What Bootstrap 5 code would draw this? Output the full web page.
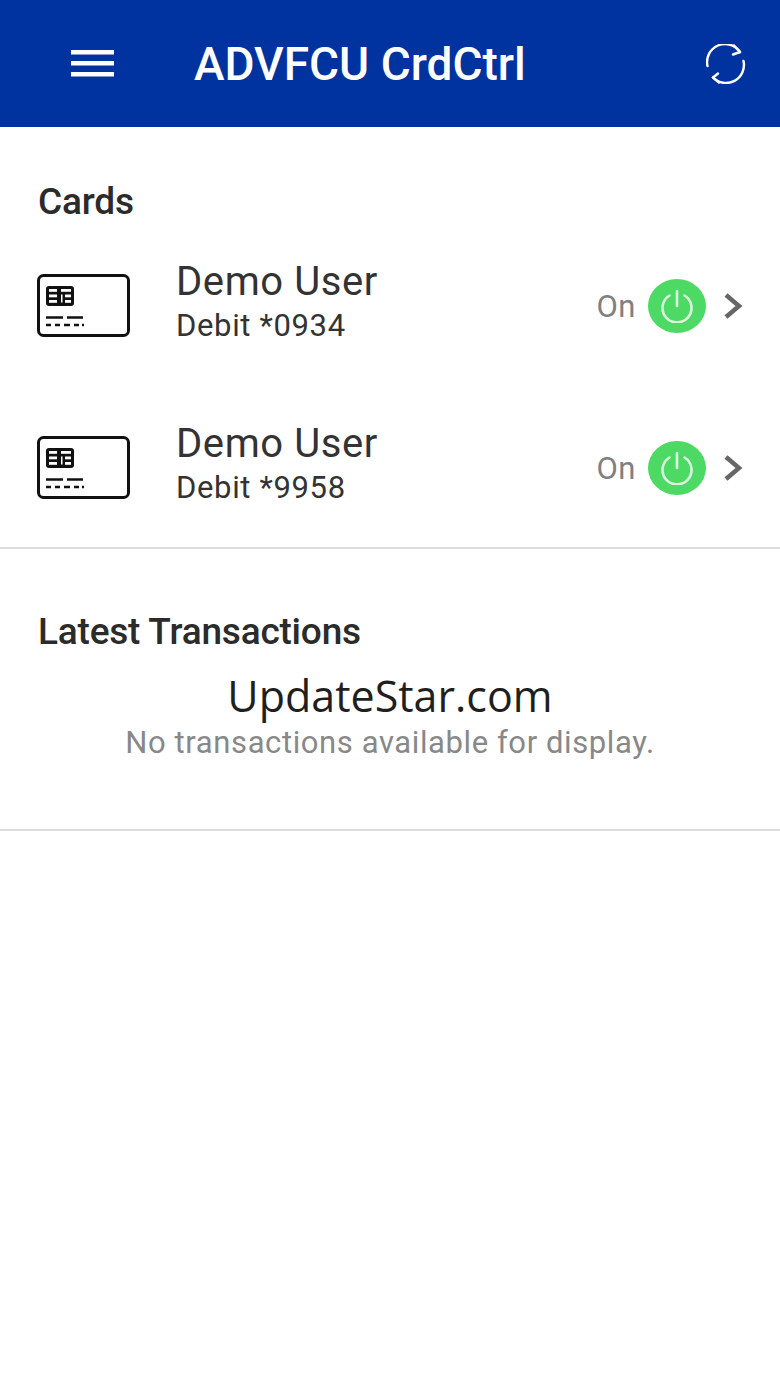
<!DOCTYPE html>
<html lang="en">
<head>
<meta charset="utf-8">
<title>ADVFCU CrdCtrl</title>
<link href="https://cdn.jsdelivr.net/npm/bootstrap@5.3.0/dist/css/bootstrap.min.css" rel="stylesheet">
<style>
html,body{background:#fff;font-family:Roboto,sans-serif;color:#2b2b2b}
.app-head{height:127px;background:#0033a0;color:#fff;padding:0 34px 0 71px}
.app-title{font-size:46px;font-weight:500;margin-left:80px;line-height:1}
.sect-title{font-size:37px;font-weight:500;padding-left:38px;line-height:40px;margin:0;color:#2b2b2b;letter-spacing:-.2px;padding-top:1px}
.sect-cards{height:420px;padding-top:54px}
.card-row{height:162px;padding:0 37px}
.card-rows{margin-top:3px}
.card-ico{margin-top:-2px}
.card-text{margin-left:46px;margin-top:-7px}
.card-name{font-size:40px;line-height:42px;letter-spacing:.6px;color:#333}
.card-sub{font-size:31px;line-height:36px;letter-spacing:.65px;color:#333;margin-top:5px}
.state{font-size:31px;color:#808080;letter-spacing:.5px;margin-right:12px;padding-top:2px}
.pwr{width:58px;height:54px;border-radius:50%;background:#4cd964}
.chev{margin-left:17px}
.rule{height:2px;background:#dcdcdc;opacity:1;border:0;margin:0}
.sect-trans{height:280px;padding-top:62px}
.mark-text{font-family:"Open Sans",sans-serif;font-size:43px;line-height:60px;text-align:center;color:#1f1f1f;margin-top:14px}
.empty-text{font-size:31px;line-height:36px;text-align:center;color:#888;letter-spacing:.6px;margin-top:-1px}
</style>
</head>
<body>
<header class="app-head d-flex align-items-center">
  <svg width="43" height="27" viewBox="0 0 43 27" aria-hidden="true"><g fill="#fff"><rect y="0" width="43" height="4.500"/><rect y="11" width="43" height="4.500"/><rect y="22" width="43" height="4.500"/></g></svg>
  <div class="app-title flex-grow-1">ADVFCU CrdCtrl</div>
  <svg width="40" height="40" viewBox="0 0 40 40" fill="none" stroke="#fff" stroke-width="2.400" stroke-linecap="round" stroke-linejoin="round" aria-hidden="true"><path d="M1.500 22A18 18 0 0 1 34 8"/><path d="M28 1.500L34 8l-7 2.500"/><path d="M37.500 17A18 18 0 0 1 7 33.500"/><path d="M12 29.500L7 33.500l6 5"/></svg>
</header>
<section class="sect-cards">
  <h2 class="sect-title">Cards</h2>
  <div class="card-rows">
    <div class="card-row d-flex align-items-center">
      <svg class="card-ico" width="93" height="63" viewBox="0 0 93 63" fill="none" stroke="#111" aria-hidden="true"><rect x="1.500" y="1.500" width="90" height="60" rx="5" stroke-width="3"/><rect x="9" y="12" width="28" height="20" rx="3" fill="#111" stroke="none"/><g fill="#fff" stroke="none"><rect x="12" y="15" width="8" height="2.800"/><rect x="12" y="20.500" width="8" height="2.800"/><rect x="12" y="26" width="8" height="2.800"/><rect x="24" y="15" width="10" height="2.800"/><rect x="28" y="20.500" width="6" height="2.800"/><rect x="28" y="26" width="6" height="2.800"/><rect x="24" y="20.500" width="1.500" height="8"/></g><path d="M9 43.500h17M30 43.500h16" stroke-width="2.600"/><path d="M9 51h5M18 51h5M27 51h6M37 51h5M45 51h2" stroke-width="2.600"/></svg>
      <div class="card-text flex-grow-1"><div class="card-name">Demo User</div><div class="card-sub">Debit *0934</div></div>
      <span class="state">On</span>
      <span class="pwr d-flex align-items-center justify-content-center"><svg width="34" height="34" viewBox="0 0 34 34" fill="none" stroke="#d9f7df" stroke-width="2.600" stroke-linecap="round" aria-hidden="true"><path d="M9.500 6.500a14.500 14.500 0 1 0 15 0"/><path d="M17 2v15"/></svg></span>
      <svg class="chev" width="20" height="26" viewBox="0 0 20 26" fill="none" stroke="#666" stroke-width="4.500" aria-hidden="true"><path d="M3 2l13 11L3 24"/></svg>
    </div>
    <div class="card-row d-flex align-items-center">
      <svg class="card-ico" width="93" height="63" viewBox="0 0 93 63" fill="none" stroke="#111" aria-hidden="true"><rect x="1.500" y="1.500" width="90" height="60" rx="5" stroke-width="3"/><rect x="9" y="12" width="28" height="20" rx="3" fill="#111" stroke="none"/><g fill="#fff" stroke="none"><rect x="12" y="15" width="8" height="2.800"/><rect x="12" y="20.500" width="8" height="2.800"/><rect x="12" y="26" width="8" height="2.800"/><rect x="24" y="15" width="10" height="2.800"/><rect x="28" y="20.500" width="6" height="2.800"/><rect x="28" y="26" width="6" height="2.800"/><rect x="24" y="20.500" width="1.500" height="8"/></g><path d="M9 43.500h17M30 43.500h16" stroke-width="2.600"/><path d="M9 51h5M18 51h5M27 51h6M37 51h5M45 51h2" stroke-width="2.600"/></svg>
      <div class="card-text flex-grow-1"><div class="card-name">Demo User</div><div class="card-sub">Debit *9958</div></div>
      <span class="state">On</span>
      <span class="pwr d-flex align-items-center justify-content-center"><svg width="34" height="34" viewBox="0 0 34 34" fill="none" stroke="#d9f7df" stroke-width="2.600" stroke-linecap="round" aria-hidden="true"><path d="M9.500 6.500a14.500 14.500 0 1 0 15 0"/><path d="M17 2v15"/></svg></span>
      <svg class="chev" width="20" height="26" viewBox="0 0 20 26" fill="none" stroke="#666" stroke-width="4.500" aria-hidden="true"><path d="M3 2l13 11L3 24"/></svg>
    </div>
  </div>
</section>
<hr class="rule">
<section class="sect-trans">
  <h2 class="sect-title">Latest Transactions</h2>
  <div class="mark-text">UpdateStar.com</div>
  <div class="empty-text">No transactions available for display.</div>
</section>
<hr class="rule">
</body>
</html>
